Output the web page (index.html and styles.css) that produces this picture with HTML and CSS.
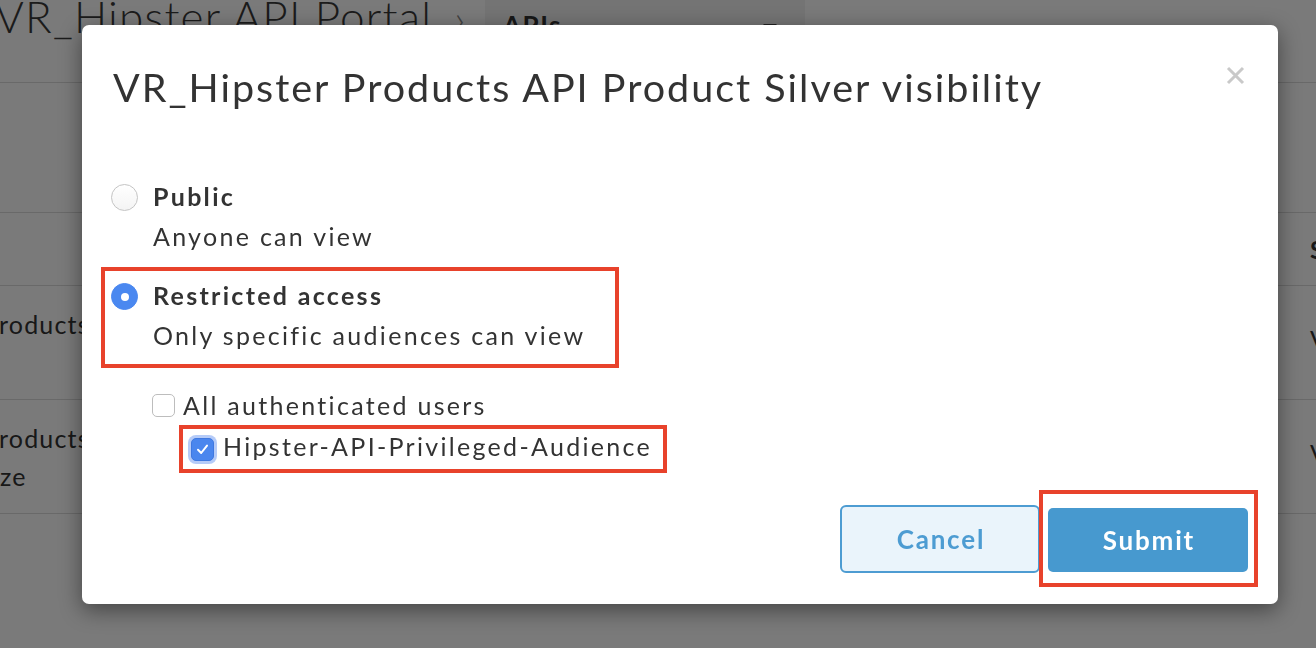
FILE: index.html
```html
<!DOCTYPE html>
<html>
<head>
<meta charset="utf-8">
<title>Visibility</title>
<link rel="stylesheet" href="styles.css">
</head>
<body>
<div class="page">
  <header class="topbar">
    <div class="brand">VR_Hipster API Portal</div>
    <div class="chev">›</div>
    <div class="crumb"><span class="crumb-label">APIs</span><span class="caret"></span></div>
  </header>
  <div class="toolbar"></div>
  <div class="row thead"><div class="c1"></div><div class="c2">Status</div></div>
  <div class="row tr"><div class="c1"><div class="l1">Products API Product Silver</div><div class="l2">r</div></div><div class="c2">Visible</div></div>
  <div class="row tr"><div class="c1"><div class="l1">Products API Product Bronze</div><div class="l2 l2-full">ze</div></div><div class="c2">Visible</div></div>
</div>
<div class="backdrop"></div>
<div class="modal">
  <div class="m-head">
    <h2 class="m-title">VR_Hipster Products API Product Silver visibility</h2>
    <button class="close" aria-label="Close">
      <svg width="19" height="19" viewBox="0 0 19 19"><path d="M2 2 L17 17 M17 2 L2 17" stroke="#c9c9c9" stroke-width="3" stroke-linecap="butt"/></svg>
    </button>
  </div>
  <div class="m-body">
    <label class="opt">
      <span class="radio"></span>
      <span class="opt-text"><span class="opt-title">Public</span><span class="opt-desc">Anyone can view</span></span>
    </label>
    <div class="hl hl-restricted">
      <label class="opt">
        <span class="radio on"></span>
        <span class="opt-text"><span class="opt-title">Restricted access</span><span class="opt-desc">Only specific audiences can view</span></span>
      </label>
    </div>
    <div class="aud">
      <label class="chk-row"><span class="chk"></span><span>All authenticated users</span></label>
      <div class="hl hl-aud">
        <label class="chk-row"><span class="chk on"><svg width="15" height="15" viewBox="0 0 15 15"><path d="M3 7.8 L6.2 11 L12 3.6" fill="none" stroke="#fff" stroke-width="2" stroke-linecap="round" stroke-linejoin="round"/></svg></span><span>Hipster-API-Privileged-Audience</span></label>
      </div>
    </div>
  </div>
  <div class="m-foot">
    <button class="btn cancel">Cancel</button>
    <div class="hl hl-submit"><button class="btn submit">Submit</button></div>
  </div>
</div>
</body>
</html>
```

FILE: styles.css
```css
* { box-sizing: border-box; }
html, body { margin: 0; padding: 0; }
body {
  width: 1316px;
  height: 648px;
  overflow: hidden;
  background: #fff;
  font-family: Lato, "Open Sans", "Liberation Sans", sans-serif;
  color: #333;
}
.page { width: 1316px; }
.topbar {
  height: 83px;
  border-bottom: 1px solid #dcdcdc;
  display: flex;
  align-items: flex-start;
  overflow: hidden;
}
.brand {
  font-size: 44px;
  font-weight: 300;
  line-height: 44px;
  letter-spacing: 1.2px;
  margin-left: -5px;
  margin-top: -6px;
  color: #3a3a3a;
  white-space: nowrap;
}
.chev {
  font-size: 40px;
  font-weight: 300;
  line-height: 36px;
  color: #888;
  margin-left: 22px;
}
.crumb {
  margin-left: 20px;
  width: 320px;
  height: 82px;
  background: #f3f3f3;
  display: flex;
  align-items: flex-start;
  padding: 8px 28px 0 18px;
  justify-content: space-between;
}
.crumb-label { font-size: 26px; font-weight: 700; color: #333; line-height: 34px; letter-spacing: 1.5px; }
.caret {
  width: 0; height: 0;
  margin-top: 16px;
  border-left: 7px solid transparent;
  border-right: 7px solid transparent;
  border-top: 7px solid #444;
}
.toolbar { height: 130px; border-bottom: 1px solid #dcdcdc; }
.row {
  display: flex;
  justify-content: space-between;
  border-bottom: 1px solid #dcdcdc;
  font-size: 25px;
  letter-spacing: 1.2px;
  overflow: hidden;
}
.thead { height: 73px; align-items: center; font-weight: 700; }
.tr { height: 114px; align-items: center; }
.c1 { line-height: 38px; white-space: nowrap; }
.c1 .l1 { margin-left: -17px; }
.c1 .l2 { margin-left: -12px; }
.c1 .l2-full { margin-left: 0; }
.c2 { width: 6px; white-space: nowrap; overflow: visible; }
.tr .c2 { align-self: flex-start; padding-top: 38px; }

.backdrop {
  position: fixed;
  inset: 0;
  background: rgba(0, 0, 0, 0.52);
}
.modal {
  position: absolute;
  left: 82px;
  top: 25px;
  width: 1196px;
  height: 579px;
  background: #fff;
  border-radius: 7px;
  box-shadow: 0 6px 22px rgba(0, 0, 0, 0.45);
  display: flex;
  flex-direction: column;
}
.m-head {
  display: flex;
  justify-content: space-between;
  align-items: flex-start;
  padding: 39px 33px 0 31px;
}
.m-title {
  margin: 0;
  font-size: 39.5px;
  font-weight: 400;
  line-height: 46px;
  letter-spacing: 2px;
  color: #333;
  white-space: nowrap;
}
.close {
  border: 0;
  background: none;
  padding: 0;
  margin-top: 2px;
  width: 19px;
  height: 19px;
  display: block;
}
.close svg { display: block; }
.m-body {
  padding: 66px 0 0 29px;
  font-size: 25px;
  line-height: 40px;
  letter-spacing: 2.3px;
}
.opt { display: flex; align-items: flex-start; gap: 15px; }
.radio {
  flex: none;
  width: 27px;
  height: 27px;
  margin-top: 8px;
  border-radius: 50%;
  border: 1px solid #c4c4c4;
  background: linear-gradient(#fff, #f4f4f4);
  position: relative;
}
.radio.on {
  border-color: #4a88f0;
  background: #4a88f0;
}
.radio.on::after {
  content: "";
  position: absolute;
  left: 50%; top: 50%;
  width: 8px; height: 8px;
  margin: -4px 0 0 -4px;
  border-radius: 50%;
  background: #fff;
}
.opt-text { display: flex; flex-direction: column; white-space: nowrap; }
.opt-title { font-weight: 700; }
.hl { border: 4px solid #e8422b; }
.hl-restricted {
  width: 518px;
  margin: 11px 0 0 -10px;
  padding: 4px 0 9px 6px;
}
.aud { margin-top: 17px; padding-left: 41px; }
.chk-row { display: flex; align-items: center; height: 40px; gap: 8px; white-space: nowrap; }
.chk {
  flex: none;
  width: 23px;
  height: 23px;
  border: 1px solid #bdbdbd;
  border-radius: 5px;
  background: #fff;
  display: flex;
  align-items: center;
  justify-content: center;
}
.chk.on {
  background: #4a86ee;
  border-color: #3f78e0;
  box-shadow: 0 0 0 3px rgba(90, 140, 240, 0.45);
}
.hl-aud {
  width: 488px;
  margin-left: 27px;
  padding-left: 8px;
}
.hl-aud .chk-row { gap: 9px; }
.hl-aud .chk-row > span:last-child { margin-top: -6px; }
.m-foot {
  margin-top: auto;
  display: flex;
  justify-content: flex-end;
  align-items: center;
  padding: 0 20px 17px 0;
}
.btn {
  font-family: Lato, "Open Sans", "Liberation Sans", sans-serif;
  font-size: 26px;
  font-weight: 700;
  letter-spacing: 1.8px;
  text-indent: 1.8px;
  width: 200px;
  cursor: pointer;
}
.cancel {
  height: 68px;
  background: #eaf4fb;
  border: 2px solid #4d9cd2;
  border-radius: 6px;
  color: #4d9cd2;
}
.hl-submit {
  margin-left: -1px;
  padding: 14px 6px 11px 5px;
}
.submit {
  display: block;
  height: 64px;
  background: #4799cf;
  border: 0;
  border-radius: 5px;
  color: #fff;
}
```
